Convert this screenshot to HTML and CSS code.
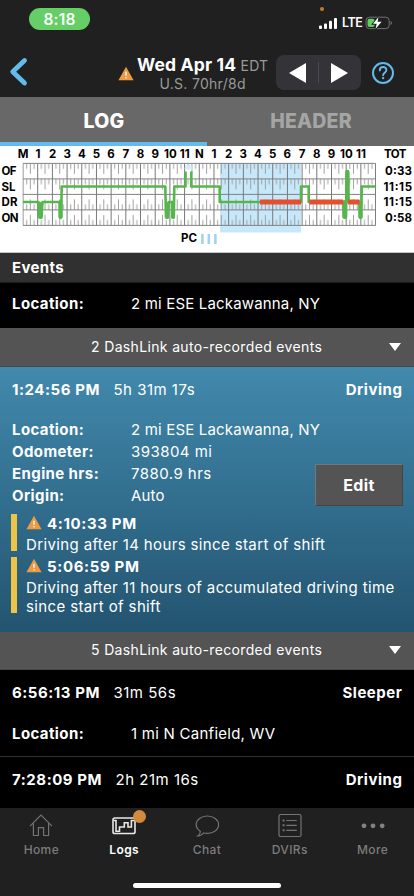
FILE: index.html
```html
<!DOCTYPE html>
<html lang="en">
<head>
<meta charset="utf-8">
<meta name="viewport" content="width=device-width, initial-scale=1">
<title>Driver Log</title>
<link rel="stylesheet" href="styles.css">
</head>
<body>
<svg class="defs" width="0" height="0" aria-hidden="true">
  <symbol id="warn" viewBox="0 0 16 15">
    <path d="M8 .8 15.6 14.2H.4Z" fill="#ee9a42"/>
    <path d="M8 5.8v4" stroke="#fff" stroke-width="1.4"/>
    <circle cx="8" cy="11.8" r=".8" fill="#fff"/>
  </symbol>
</svg>
<div class="app">
  <div class="status">
    <span class="clock">8:18</span>
    <div class="signals">
      <i class="mic"></i>
      <svg width="20" height="13" viewBox="0 0 20 13" fill="#fff"><rect x="1" y="8.5" width="3" height="3.5" rx="1"/><rect x="6" y="6.5" width="3" height="5.5" rx="1"/><rect x="11" y="3.8" width="3" height="8.2" rx="1"/><rect x="16" y="1" width="3" height="11" rx="1"/></svg>
      <span class="lte">LTE</span>
      <svg width="28" height="14" viewBox="0 0 28 14"><rect x="1" y="1.2" width="23.2" height="11.4" rx="3.5" fill="none" stroke="#717171"/><rect x="2.5" y="2.7" width="7.2" height="8.4" rx="2" fill="#62cf62"/><path d="M25.6 5v4q1.3-.6 1.3-2T25.6 5Z" fill="#777"/><path d="M13.5 1 8 7.8h3.7L10.5 13l6.1-7.3h-4Z" fill="#fff" stroke="#202020" stroke-width="1.8" paint-order="stroke"/></svg>
    </div>
  </div>
  <header class="nav">
    <svg class="back" width="20" height="30" viewBox="0 0 20 30"><path d="M16.5 3.5 4.7 14.7 16.5 26" fill="none" stroke="#62bbea" stroke-width="4.8" stroke-linecap="round" stroke-linejoin="round"/></svg>
    <svg class="warn head-warn"><use href="#warn"/></svg>
    <div class="title">
      <div class="date">Wed Apr 14 <span>EDT</span></div>
      <div class="rule">U.S. 70hr/8d</div>
    </div>
    <div class="pager">
      <svg width="17" height="20" viewBox="0 0 17 20"><path d="M0 10 17 0v20Z" fill="#fff"/></svg>
      <i></i>
      <svg width="17" height="20" viewBox="0 0 17 20"><path d="M17 10 0 0v20Z" fill="#fff"/></svg>
    </div>
    <svg class="help" width="24" height="24" viewBox="0 0 24 24" fill="none" stroke="#62bbea"><circle cx="12" cy="12" r="10" stroke-width="2"/><path d="M8.8 9.4C8.8 4.9 15.4 5 15.4 9.1c0 2.7-3.3 2.7-3.3 5.2" stroke-width="1.9" stroke-linecap="round"/><circle cx="12.1" cy="17.1" r="1.2" fill="#62bbea" stroke="none"/></svg>
  </header>
  <nav class="tabs"><span class="on">LOG</span><span>HEADER</span></nav>

  <svg class="chart" width="414" height="107" viewBox="0 146 414 107">
    <defs>
      <pattern id="down" x="23" y="163.4" width="14.69" height="15.5" patternUnits="userSpaceOnUse">
        <path d="M3.67 0v5.5M7.35 0v10.5M11.02 0v5.5" stroke="#999" stroke-width=".9"/>
      </pattern>
      <pattern id="up" x="23" y="194.4" width="14.69" height="15.5" patternUnits="userSpaceOnUse">
        <path d="M3.67 15.5v-5.5M7.35 15.5v-10.5M11.02 15.5v-5.5" stroke="#999" stroke-width=".9"/>
      </pattern>
      <pattern id="hours" x="22.5" y="163" width="14.69" height="63" patternUnits="userSpaceOnUse">
        <path d="M.5 0v63" stroke="#777" stroke-width="1"/>
      </pattern>
    </defs>
    <path fill="#c7e8fb" d="M220 163h81v69.5h-81z"/>
    <path fill="url(#down)" d="M23 163.4h352.6v31H23z"/>
    <path fill="url(#up)" d="M23 194.4h352.6v31H23z"/>
    <path fill="url(#hours)" d="M22.5 163.4h353.6v62H22.5z"/>
    <path d="M23 163.4h352.6M23 178.9h352.6M23 194.4h352.6M23 209.9h352.6M23 225.4h352.6" stroke="#777" stroke-width=".9"/>
    <g fill="none" stroke="#55b64c" stroke-width="2.6" stroke-linejoin="round">
      <path d="M23 202H38.5L39.5 217.3H41.5L42.5 202H59.7L60 217.3H61.2L61.7 186.5H165.3L166 217.3H168L168.8 202H172.2L172.5 217.3H173.8L174.3 186.5H185.5V171.5M191.3 171.5V186.5H219.7V202H301V186.5H308.7V202H343.3L343.7 217.3H346L346.7 171.3H348L348.5 202H359.5L359.8 217.3H361.2L361.8 186.5H375.6"/>
      <path d="M40.5 204v13M60.5 202v15M167 204v13M173 204v13M344.7 202v15M347.4 172v28M360.5 202v15" stroke-width="4" stroke-linecap="round"/>
    </g>
    <path d="M186 169.5c0-4 5-4 5 0" fill="none" stroke="#d3ebf8" stroke-width="3"/>
    <path d="M260 202h41M309.4 202h33.8M348 202h11.5" stroke="#e44f2d" stroke-width="5"/>
    <g class="cl mid">
      <text x="23" y="157.7">M</text><text x="38" y="157.7">1</text><text x="52.5" y="157.7">2</text><text x="67.2" y="157.7">3</text><text x="81.8" y="157.7">4</text><text x="96.4" y="157.7">5</text><text x="111" y="157.7">6</text><text x="125.8" y="157.7">7</text><text x="140.4" y="157.7">8</text><text x="155.2" y="157.7">9</text><text x="170.3" y="157.7">10</text><text x="184.7" y="157.7">11</text><text x="199.5" y="157.7">N</text><text x="214" y="157.7">1</text><text x="228.7" y="157.7">2</text><text x="243.3" y="157.7">3</text><text x="258" y="157.7">4</text><text x="272.6" y="157.7">5</text><text x="287.3" y="157.7">6</text><text x="302" y="157.7">7</text><text x="316.7" y="157.7">8</text><text x="331.4" y="157.7">9</text><text x="346.4" y="157.7">10</text><text x="361" y="157.7">11</text><text x="395.3" y="157.7" textLength="22.5">TOT</text>
    </g>
    <g class="cl">
      <text x="1.5" y="175.2" textLength="15">OF</text><text x="1.5" y="190.7" textLength="14">SL</text><text x="1.5" y="206.2" textLength="16">DR</text><text x="1.5" y="221.7" textLength="17">ON</text><text x="181" y="242.4" textLength="16">PC</text>
    </g>
    <g class="cl end">
      <text x="412" y="175.2" textLength="27">0:33</text><text x="412" y="190.7" textLength="28.5">11:15</text><text x="412" y="206.2" textLength="28.5">11:15</text><text x="412" y="221.7" textLength="27">0:58</text>
    </g>
    <path d="M202.4 234v10M208.8 234v10M215.4 234v10" stroke="#9dd2f4" stroke-width="2.5"/>
    <path d="M0 252.5h414" stroke="#c4c4c4"/>
  </svg>

  <h2 class="events">Events</h2>
  <main>
    <div class="row first"><b>Location:</b><span>2 mi ESE Lackawanna, NY</span></div>
    <div class="auto"><span class="auto-text">2 DashLink auto-recorded events</span><i class="caret"></i></div>
    <section class="current">
      <div class="event-head"><b>1:24:56 PM</b><span>5h 31m 17s</span><b class="state">Driving</b></div>
      <div class="details">
        <div class="facts">
          <div class="row"><b>Location:</b><span>2 mi ESE Lackawanna, NY</span></div>
          <div class="row"><b>Odometer:</b><span class="num">393804 mi</span></div>
          <div class="row"><b>Engine hrs:</b><span class="num">7880.9 hrs</span></div>
          <div class="row"><b>Origin:</b><span>Auto</span></div>
        </div>
        <button class="edit">Edit</button>
      </div>
      <div class="alert"><div class="alert-time"><svg class="warn"><use href="#warn"/></svg><b>4:10:33 PM</b></div><p>Driving after 14 hours since start of shift</p></div>
      <div class="alert"><div class="alert-time"><svg class="warn"><use href="#warn"/></svg><b>5:06:59 PM</b></div><p>Driving after 11 hours of accumulated driving time<br>since start of shift</p></div>
    </section>
    <div class="auto"><span class="auto-text">5 DashLink auto-recorded events</span><i class="caret"></i></div>
    <section class="sleeper">
      <div class="event-head"><b>6:56:13 PM</b><span>31m 56s</span><b class="state">Sleeper</b></div>
      <div class="row"><b>Location:</b><span>1 mi N Canfield, WV</span></div>
    </section>
    <section class="last">
      <div class="event-head"><b>7:28:09 PM</b><span>2h 21m 16s</span><b class="state">Driving</b></div>
    </section>
  </main>
  <footer>
    <nav class="bottom">
      <div><svg width="26" height="26" viewBox="0 0 26 26"><path d="M2 14.2 13 3l11 11.2M5.4 11.5v12h5v-7.8h5.2v7.8h5v-12"/></svg><span>Home</span></div>
      <div class="active"><svg width="26" height="26" viewBox="0 0 26 26"><rect x="2" y="6" width="22" height="15.5" rx="1.8"/><path d="M2.5 8.5h2.5v10.7h3.5v-4.2h4.8v-4.3h3.7v4.3h3.4V8.5h3"/></svg><span>Logs</span><i class="badge"></i></div>
      <div><svg width="26" height="26" viewBox="0 0 26 26"><path d="M13.3 4C7.2 4 2.2 7.7 2.2 12.5c0 3 1.7 5.3 4.2 6.9.1 1.7-.7 3-2.6 4.5 2.6-.1 4.4-1 5.6-2.9 7.8 1.8 15.2-2.3 15.2-8.5C24.6 7.7 19.5 4 13.3 4Z"/></svg><span>Chat</span></div>
      <div><svg width="26" height="26" viewBox="0 0 26 26"><rect x="2" y="2.5" width="22" height="22" rx="1.5"/><path d="M9.3 8.5h10.5M9.3 13.3h10.5M9.3 18.3h10.5"/><path d="M5.6 8.5h2M5.6 13.3h2M5.6 18.3h2" stroke-width="2"/></svg><span>DVIRs</span></div>
      <div><svg width="26" height="26" viewBox="0 0 26 26"><g fill="#828282" stroke="none"><circle cx="4" cy="13.8" r="2.4"/><circle cx="13" cy="13.8" r="2.4"/><circle cx="22.2" cy="13.8" r="2.4"/></g></svg><span>More</span></div>
    </nav>
    <i class="home-bar"></i>
  </footer>
</div>
</body>
</html>
```
FILE: styles.css
```css
* { box-sizing: border-box; }
body { margin: 0; background: #000; }
.defs { position: absolute; }
svg { display: block; flex: none; }
.app {
  width: 414px; height: 896px; overflow: hidden;
  display: flex; flex-direction: column;
  font: 400 15px/22px Inter, "Liberation Sans", sans-serif;
  letter-spacing: .17px; color: #fff; white-space: nowrap;
}
b { font-weight: 700; letter-spacing: .45px; }
.status { height: 48px; flex: none; display: flex; justify-content: space-between; background: #202020; padding: 8px 21px 0 29px; }
.clock { width: 61px; height: 22px; border-radius: 11px; background: #65ce67; text-align: center; font-weight: 600; font-size: 15.5px; line-height: 23px; letter-spacing: .2px; }
.signals { position: relative; display: flex; align-items: center; height: 14px; margin-top: 8px; }
.lte { margin: 0 5px 0 4px; font-size: 12.5px; font-weight: 600; letter-spacing: -.4px; width: 18px; }
.mic { position: absolute; left: 2px; top: -9.5px; width: 4px; height: 4px; border-radius: 50%; background: #c17c32; }
.nav { height: 49px; flex: none; background: #202020; display: flex; align-items: flex-start; padding: 7px 19px 0 8px; }
.back { margin-top: 2px; }
.warn { width: 16px; height: 15px; }
.head-warn { margin: 10.5px 0 0 90px; }
.title { width: 136px; margin-left: 1px; text-align: center; }
.date { font-size: 17.5px; line-height: 19px; font-weight: 700; letter-spacing: .15px; }
.date span { font-size: 14px; font-weight: 400; color: #9a9a9a; letter-spacing: .2px; }
.rule { font-size: 14px; line-height: 17px; color: #9a9a9a; letter-spacing: .3px; }
.pager { width: 85px; height: 35px; margin-left: 6px; border-radius: 8px; background: #343338; display: flex; align-items: center; justify-content: center; gap: 12px; }
.pager i { width: 1px; height: 21px; background: #4b4a50; }
.help { margin: 6px 0 0 10px; }
.tabs { height: 49px; flex: none; display: flex; background: #686868; }
.tabs span { flex: 1; text-align: center; font-size: 19.5px; line-height: 49px; font-weight: 800; letter-spacing: .2px; color: #a5a5a5; padding-left: 1px; }
.tabs .on { color: #fff; border-bottom: 4.5px solid #62bbea; }
.chart { background: #fff; }
.cl { font: 700 11.5px Inter, sans-serif; letter-spacing: 0; fill: #000; }
.mid { text-anchor: middle; }
.end { text-anchor: end; }
.events { margin: 0; height: 30px; flex: none; padding: 0 12px; background: #303030; border-bottom: 1px solid #1b1b1b; font-size: 15px; line-height: 30px; font-weight: 700; letter-spacing: .35px; }
.row { display: grid; grid-template-columns: 119px 1fr; height: 22px; }
.row b { letter-spacing: .4px; }
.num { letter-spacing: .45px; }
.first { height: 45px; padding: 10px 12px 0; }
.auto { height: 38.5px; background: #545454; border-bottom: 1px solid #474747; display: flex; align-items: center; justify-content: space-between; padding: 0 13px 0 91px; font-size: 14px; letter-spacing: .35px; }
.caret { width: 0; height: 0; border: 6.5px solid transparent; border-top: 8px solid #fff; border-bottom: 0; }
.current { height: 265px; padding: 12px 12px 0; background: linear-gradient(#4189ad, #235470); }
.event-head { display: flex; }
.event-head b { letter-spacing: .55px; }
.event-head .state { margin-left: auto; margin-right: -.5px; }
.event-head span { margin-left: 13.5px; letter-spacing: .5px; }
.details { display: flex; justify-content: space-between; height: 88px; margin-top: 18px; }
.facts { width: 280px; }
.edit { flex: none; width: 88px; height: 42px; margin: 45.5px -1px 0 0; padding: 0; border: 1.5px solid; border-color: #767676 #444 #444 #767676; background: #545454; color: #fff; font: 700 16px Inter, sans-serif; letter-spacing: .4px; }
.alert { border-left: 6px solid #edc448; margin: 7px -12px 0 -1px; padding-left: 9px; height: 37px; }
.alert + .alert { height: 56px; margin-top: 6px; }
.alert-time { display: flex; height: 19px; line-height: 19px; gap: 5px; }
.alert-time b { letter-spacing: .65px; }
.alert .warn { margin-top: 1px; }
.alert p { margin: 3.5px 0 0; line-height: 18.5px; letter-spacing: .37px; }
.sleeper { height: 87px; padding: 12px 12px 0; border-bottom: 1px solid #303030; }
.sleeper .row { margin-top: 18.5px; }
.sleeper .row span { letter-spacing: .25px; }
.last { height: 50.5px; padding: 12px 12px 0; }
footer { height: 88px; flex: none; margin-top: auto; background: #202020; display: flex; flex-direction: column; align-items: center; }
.bottom { width: 414px; height: 74px; display: flex; padding-top: 4px; }
.bottom > div { width: 82.8px; height: 46px; position: relative; display: flex; flex-direction: column; align-items: center; color: #7c7c7c; font-size: 12px; line-height: 15px; font-weight: 500; letter-spacing: .4px; }
.bottom svg { fill: none; stroke: #737373; stroke-width: 1.2; }
.bottom span { margin-top: 4px; }
.bottom .active { color: #fff; font-weight: 600; }
.bottom .active svg { stroke: #e8e8e8; stroke-width: 1.6; }
.badge { position: absolute; left: 50.5px; top: -2px; width: 13px; height: 13px; border-radius: 50%; background: #d28b3d; }
.home-bar { width: 148px; height: 5px; border-radius: 3px; background: #fff; margin-top: .5px; }
```
